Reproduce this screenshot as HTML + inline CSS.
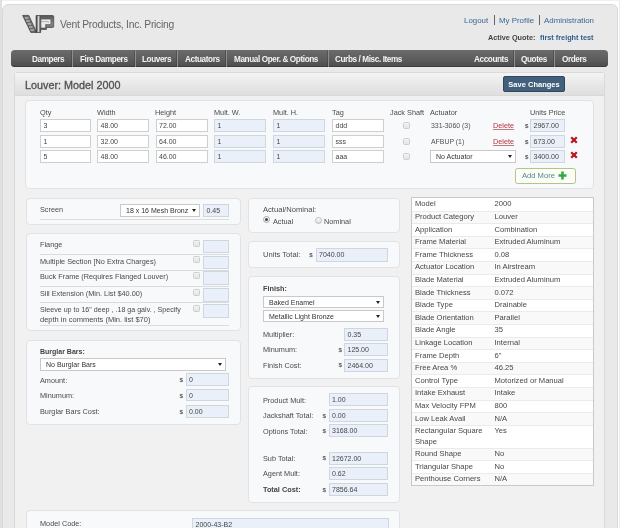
<!DOCTYPE html><html><head><meta charset="utf-8"><style>
*{box-sizing:border-box;margin:0;padding:0}
html,body{width:620px;height:528px;overflow:hidden;background:#fff;font-family:"Liberation Sans",sans-serif;color:#4a4a4a;font-size:7.3px}
.a{position:absolute}
.t{position:absolute;white-space:nowrap;line-height:10px}
#outer{left:2px;top:4px;width:616px;height:600px;background:#e9e9ea;border:1px solid #d8d8d8;border-radius:6px}
#brand{left:60px;top:18.7px;font-size:10.3px;letter-spacing:-0.25px;color:#666;line-height:12px}
.lnk{color:#2f5e8c}
#nav{left:11px;top:50px;width:597px;height:17px;border-radius:4px;background:linear-gradient(#6b6b6b,#5d5d5d 55%,#4b4b4b);box-shadow:inset 0 -1px 0 #3c3c3c}
.nv{position:absolute;top:1.2px;height:17px;line-height:17px;color:#f4f4f4;font-weight:bold;font-size:8.2px;letter-spacing:-0.4px;white-space:nowrap}
.sep{position:absolute;top:0;width:1px;height:17px;background:#8e8e8e;box-shadow:-1px 0 0 rgba(50,50,50,0.35)}
#content{left:14px;top:72px;width:591px;height:500px;background:#f1f1f2;border:1px solid #d9d9d9;border-radius:3px}
#chead{left:15px;top:73px;width:589px;height:23px;background:linear-gradient(#f4f4f4,#e6e6e6 60%,#dfdfdf);border-bottom:1px solid #d9d9d9}
#title{left:25px;top:78.5px;font-size:10.8px;color:#505050;line-height:13px;-webkit-text-stroke:0.3px #505050}
#save{left:503px;top:76px;width:62px;height:16px;background:#42607b;border:1px solid #2f475e;border-radius:2px;color:#fff;font-weight:bold;font-size:7.5px;line-height:15px;text-align:center}
.pnl{position:absolute;background:#f8f9fb;border:1px solid #e1e2e5;border-radius:4px}
.in{position:absolute;border:1px solid #cfcfcf;background:#fff;font-size:7px;line-height:11px;padding-left:2.5px;color:#454545;white-space:nowrap;overflow:hidden}
.ro{background:#eaf0f9;border-color:#d0d6dd}
.cb{position:absolute;width:7px;height:7px;border:1px solid #cdcdcd;border-radius:1.5px;background:linear-gradient(#f4f4f4,#e4e4e4)}
.sel{position:absolute;border:1px solid #c9c9c9;background:#fff;font-size:7px;line-height:11px;padding-left:5px;color:#333;white-space:nowrap;overflow:hidden}
.sel:after{content:"";position:absolute;right:3px;top:4px;border-left:2.2px solid transparent;border-right:2.2px solid transparent;border-top:3.5px solid #222}
.hl{position:absolute;height:1px;background:#dcdcdc}
.tbl{position:absolute;background:#fff;border:1px solid #c9c9c9}
.tr{position:absolute;left:0;width:100%}
.tr:nth-child(even){background:#f7f7f7}
</style></head><body><div id="wrap" style="position:absolute;left:0;top:0;width:620px;height:528px;overflow:hidden;filter:blur(0.35px)">
<div class="a" style="left:0;top:0;width:620px;height:1px;background:#f0f0f0"></div><div class="a" style="left:0;top:0;width:1.5px;height:528px;background:#e0e0e0"></div><div class="a" style="left:619px;top:0;width:1px;height:528px;background:#ececec"></div>
<div id="outer" class="a"></div>
<svg class="a" style="left:18px;top:10px" width="40" height="28" viewBox="0 0 40 28">
  <defs>
   <linearGradient id="lg1" x1="0" x2="1" y1="0" y2="0"><stop offset="0" stop-color="#3a3a3a"/><stop offset="0.5" stop-color="#d8d8d8"/><stop offset="1" stop-color="#444"/></linearGradient>
   <linearGradient id="lg2" x1="0" x2="0" y1="0" y2="1"><stop offset="0" stop-color="#555"/><stop offset="0.5" stop-color="#8a8a8a"/><stop offset="1" stop-color="#505050"/></linearGradient>
  </defs>
  <polygon points="4.6,5.4 10.8,5.4 18.6,22.4 12.8,22.4" fill="#6a6a6a" stroke="#3a3a3a" stroke-width="0.7"/>
  <g stroke="#cfcfcf" stroke-width="1.1"><line x1="6.9" y1="8" x2="10.4" y2="8"/><line x1="8.3" y1="11" x2="11.8" y2="11"/><line x1="9.7" y1="14" x2="13.2" y2="14"/><line x1="11.1" y1="17" x2="14.6" y2="17"/><line x1="12.5" y1="20" x2="16" y2="20"/></g>
  <path d="M18.1,5.5 H34.6 Q35.7,5.5 35.7,6.6 V16.4 Q35.7,17.4 34.6,17.4 H28.4 V19.4 H22.7 V22.5 H18.1 Z" fill="url(#lg2)" stroke="#3c3c3c" stroke-width="0.7"/>
  <rect x="18.5" y="5.9" width="3.9" height="16.3" fill="url(#lg1)"/>
  <path d="M22.9,9.1 H32.9 V14.6 H27.6 V18 H22.9 Z" fill="#ececec" stroke="#444" stroke-width="0.6"/>
  <path d="M22.9,11.6 H30.4 V12.8" fill="none" stroke="#9a9a9a" stroke-width="0.7"/>
</svg>
<div id="brand" class="t">Vent Products, Inc. Pricing</div>
<div class="t" style="left:464px;top:16.0px;color:#3a6794;font-size:7.9px">Logout</div>
<div class="a" style="left:494px;top:15px;width:1px;height:10px;background:#666"></div>
<div class="t" style="left:499px;top:16.0px;color:#3a6794;font-size:7.9px">My Profile</div>
<div class="a" style="left:539px;top:15px;width:1px;height:10px;background:#666"></div>
<div class="t" style="left:544px;top:16.0px;color:#3a6794;font-size:7.9px">Administration</div>
<div class="t" style="left:488px;top:32.8px;font-weight:bold;color:#444">Active Quote:</div>
<div class="t" style="left:540px;top:32.8px;font-weight:bold;color:#2f5e8c">first freight test</div>
<div id="nav" class="a">
<div class="nv" style="left:21px">Dampers</div>
<div class="sep" style="left:61px"></div>
<div class="nv" style="left:69px">Fire Dampers</div>
<div class="sep" style="left:124px"></div>
<div class="nv" style="left:131px">Louvers</div>
<div class="sep" style="left:166px"></div>
<div class="nv" style="left:174px">Actuators</div>
<div class="sep" style="left:215px"></div>
<div class="nv" style="left:223px">Manual Oper. &amp; Options</div>
<div class="sep" style="left:317px"></div>
<div class="nv" style="left:324px">Curbs / Misc. Items</div>
<div class="nv" style="left:463px">Accounts</div>
<div class="sep" style="left:503px"></div>
<div class="nv" style="left:510px">Quotes</div>
<div class="sep" style="left:543px"></div>
<div class="nv" style="left:551px">Orders</div>
</div>
<div id="content" class="a"></div><div id="chead" class="a"></div>
<div id="title" class="t">Louver: Model 2000</div><div id="save" class="a">Save Changes</div>
<div class="pnl" style="left:25px;top:100px;width:569px;height:89px"></div>
<div class="t" style="left:40px;top:108.0px;">Qty</div>
<div class="t" style="left:97px;top:108.0px;">Width</div>
<div class="t" style="left:155px;top:108.0px;">Height</div>
<div class="t" style="left:214px;top:108.0px;">Mult. W.</div>
<div class="t" style="left:273px;top:108.0px;">Mult. H.</div>
<div class="t" style="left:332px;top:108.0px;">Tag</div>
<div class="t" style="left:390px;top:108.0px;">Jack Shaft</div>
<div class="t" style="left:430px;top:108.0px;">Actuator</div>
<div class="t" style="left:530px;top:108.0px;">Units Price</div>
<div class="in" style="left:40px;top:119px;width:51px;height:13px;">3</div>
<div class="in" style="left:97px;top:119px;width:52px;height:13px;">48.00</div>
<div class="in" style="left:155.5px;top:119px;width:52.0px;height:13px;">72.00</div>
<div class="in ro" style="left:214px;top:119px;width:52px;height:13px;">1</div>
<div class="in ro" style="left:273px;top:119px;width:52px;height:13px;">1</div>
<div class="in" style="left:332px;top:119px;width:52px;height:13px;">ddd</div>
<div class="cb" style="left:402.5px;top:122.0px"></div>
<div class="t" style="left:431px;top:121.2px;font-size:6.9px;color:#505050">331-3060 (3)</div>
<div class="t" style="left:493px;top:121.0px;color:#b3343a;text-decoration:underline;text-decoration-color:#c9777b">Delete</div>
<div class="t" style="left:525px;top:121.5px;font-size:6.2px;font-weight:bold;color:#555;margin-top:-0.4px">$</div>
<div class="in ro" style="left:530px;top:119px;width:34.5px;height:13px;">2967.00</div>
<div class="in" style="left:40px;top:135px;width:51px;height:13px;">1</div>
<div class="in" style="left:97px;top:135px;width:52px;height:13px;">32.00</div>
<div class="in" style="left:155.5px;top:135px;width:52.0px;height:13px;">64.00</div>
<div class="in ro" style="left:214px;top:135px;width:52px;height:13px;">1</div>
<div class="in ro" style="left:273px;top:135px;width:52px;height:13px;">1</div>
<div class="in" style="left:332px;top:135px;width:52px;height:13px;">sss</div>
<div class="cb" style="left:402.5px;top:138.0px"></div>
<div class="t" style="left:431px;top:137.2px;font-size:6.9px;color:#505050">AFBUP (1)</div>
<div class="t" style="left:493px;top:137.0px;color:#b3343a;text-decoration:underline;text-decoration-color:#c9777b">Delete</div>
<div class="t" style="left:525px;top:137.5px;font-size:6.2px;font-weight:bold;color:#555;margin-top:-0.4px">$</div>
<div class="in ro" style="left:530px;top:135px;width:34.5px;height:13px;">673.00</div>
<svg class="a" style="left:569.5px;top:136px" width="8" height="8" viewBox="0 0 8 8"><path d="M1.2,1.2 L6.8,6.8 M6.8,1.2 L1.2,6.8" stroke="#b8171f" stroke-width="2.3"/></svg>
<div class="in" style="left:40px;top:150px;width:51px;height:13px;">5</div>
<div class="in" style="left:97px;top:150px;width:52px;height:13px;">48.00</div>
<div class="in" style="left:155.5px;top:150px;width:52.0px;height:13px;">46.00</div>
<div class="in ro" style="left:214px;top:150px;width:52px;height:13px;">1</div>
<div class="in ro" style="left:273px;top:150px;width:52px;height:13px;">1</div>
<div class="in" style="left:332px;top:150px;width:52px;height:13px;">aaa</div>
<div class="cb" style="left:402.5px;top:153.0px"></div>
<div class="sel" style="left:430px;top:150px;width:86px;height:13px">No Actuator</div>
<div class="t" style="left:525px;top:152.5px;font-size:6.2px;font-weight:bold;color:#555;margin-top:-0.4px">$</div>
<div class="in ro" style="left:530px;top:150px;width:34.5px;height:13px;">3400.00</div>
<svg class="a" style="left:569.5px;top:151px" width="8" height="8" viewBox="0 0 8 8"><path d="M1.2,1.2 L6.8,6.8 M6.8,1.2 L1.2,6.8" stroke="#b8171f" stroke-width="2.3"/></svg>
<div class="a" style="left:515px;top:168px;width:61px;height:16px;background:#fcfdf9;border:1px solid #b3c67e;border-radius:2.5px"></div>
<div class="t" style="left:522px;top:171.2px;color:#4f8a80;font-size:7.6px">Add More</div>
<svg class="a" style="left:558px;top:171px" width="9" height="9" viewBox="0 0 9 9"><path d="M4.5,0.5 V8.5 M0.5,4.5 H8.5" stroke="#36a846" stroke-width="2.6"/></svg>
<div class="pnl" style="left:25.5px;top:198px;width:215.0px;height:27px"></div>
<div class="t" style="left:40px;top:205.0px;">Screen</div>
<div class="sel" style="left:120px;top:204px;width:80px;height:13px">18 x 16 Mesh Bronz</div>
<div class="in ro" style="left:203px;top:204px;width:26px;height:13px;">0.45</div>
<div class="hl" style="left:40px;top:219px;width:189px"></div>
<div class="pnl" style="left:25.5px;top:233px;width:215.0px;height:98px"></div>
<div class="t" style="left:40px;top:240.4px;">Flange</div>
<div class="cb" style="left:193.0px;top:240.1px"></div>
<div class="in ro" style="left:203px;top:239.70000000000002px;width:26px;height:13.599999999999994px;"></div>
<div class="hl" style="left:40px;top:254px;width:189px"></div>
<div class="t" style="left:40px;top:256.5px;">Multiple Section [No Extra Charges)</div>
<div class="cb" style="left:193.0px;top:256.2px"></div>
<div class="in ro" style="left:203px;top:255.8px;width:26px;height:13.599999999999966px;"></div>
<div class="hl" style="left:40px;top:270px;width:189px"></div>
<div class="t" style="left:40px;top:272.0px;">Buck Frame (Requires Flanged Louver)</div>
<div class="cb" style="left:193.0px;top:271.7px"></div>
<div class="in ro" style="left:203px;top:271.3px;width:26px;height:13.599999999999966px;"></div>
<div class="hl" style="left:40px;top:286px;width:189px"></div>
<div class="t" style="left:40px;top:289.0px;">Sill Extension (Min. List $40.00)</div>
<div class="cb" style="left:193.0px;top:288.7px"></div>
<div class="in ro" style="left:203px;top:288.3px;width:26px;height:13.599999999999966px;"></div>
<div class="hl" style="left:40px;top:302px;width:189px"></div>
<div class="t" style="left:40px;top:305.0px;font-size:7.1px">Sleeve up to 16" deep , .18 ga galv. , Specify</div>
<div class="t" style="left:40px;top:314.7px;font-size:7.5px">depth in comments (Min. list $70)</div>
<div class="cb" style="left:193.0px;top:304.7px"></div>
<div class="in ro" style="left:203px;top:304.3px;width:26px;height:13.699999999999989px;"></div>
<div class="hl" style="left:40px;top:325px;width:189px"></div>
<div class="pnl" style="left:25.5px;top:339.5px;width:215.0px;height:85.0px"></div>
<div class="t" style="left:40px;top:347.3px;font-weight:bold;color:#444;font-size:7px">Burglar Bars:</div>
<div class="sel" style="left:40px;top:358px;width:186px;height:12.5px">No Burglar Bars</div>
<div class="t" style="left:40px;top:375.6px;">Amount:</div>
<div class="t" style="left:179.5px;top:375.6px;font-size:6.2px;font-weight:bold;color:#555;margin-top:-0.4px">$</div>
<div class="in ro" style="left:185.5px;top:373.3px;width:43.5px;height:12.800000000000011px;">0</div>
<div class="t" style="left:40px;top:391.0px;">Minumum:</div>
<div class="t" style="left:179.5px;top:391.0px;font-size:6.2px;font-weight:bold;color:#555;margin-top:-0.4px">$</div>
<div class="in ro" style="left:185.5px;top:388.7px;width:43.5px;height:12.800000000000011px;">0</div>
<div class="t" style="left:40px;top:407.3px;">Burglar Bars Cost:</div>
<div class="t" style="left:179.5px;top:407.3px;font-size:6.2px;font-weight:bold;color:#555;margin-top:-0.4px">$</div>
<div class="in ro" style="left:185.5px;top:405.0px;width:43.5px;height:12.800000000000011px;">0.00</div>
<div class="pnl" style="left:247.5px;top:197.5px;width:152.5px;height:35.5px"></div>
<div class="t" style="left:263px;top:204.6px;font-size:7.6px">Actual/Nominal:</div>
<div class="a" style="left:262.5px;top:216.3px;width:7px;height:7px;border-radius:50%;border:1px solid #aaa;background:linear-gradient(#fff,#e8e8e8)"></div>
<div class="a" style="left:264.5px;top:218.3px;width:3px;height:3px;border-radius:50%;background:#444"></div>
<div class="t" style="left:273px;top:216.5px;">Actual</div>
<div class="a" style="left:314.5px;top:216.5px;width:7px;height:7px;border-radius:50%;border:1px solid #bbb;background:linear-gradient(#fff,#ddd)"></div>
<div class="t" style="left:324px;top:216.5px;">Nominal</div>
<div class="pnl" style="left:247.5px;top:240.5px;width:152.5px;height:27.5px"></div>
<div class="t" style="left:263px;top:250.4px;font-size:7.6px">Units Total:</div>
<div class="t" style="left:309.2px;top:250.6px;font-size:6.2px;font-weight:bold;color:#555;margin-top:-0.4px">$</div>
<div class="in ro" style="left:315.5px;top:248px;width:72.0px;height:13.5px;">7040.00</div>
<div class="pnl" style="left:247.5px;top:276px;width:152.5px;height:102.5px"></div>
<div class="t" style="left:263px;top:283.8px;font-weight:bold;color:#444">Finish:</div>
<div class="sel" style="left:263px;top:296px;width:121px;height:11.5px">Baked Enamel</div>
<div class="sel" style="left:263px;top:310px;width:121px;height:12px">Metallic Light Bronze</div>
<div class="t" style="left:263px;top:329.7px;">Multiplier:</div>
<div class="in ro" style="left:344px;top:327.5px;width:43.5px;height:13.0px;">0.35</div>
<div class="t" style="left:263px;top:345.3px;">Minumum:</div>
<div class="t" style="left:338.5px;top:345.3px;font-size:6.2px;font-weight:bold;color:#555;margin-top:-0.4px">$</div>
<div class="in ro" style="left:344px;top:343px;width:43.5px;height:13px;">125.00</div>
<div class="t" style="left:263px;top:360.5px;">Finish Cost:</div>
<div class="t" style="left:338.5px;top:360.5px;font-size:6.2px;font-weight:bold;color:#555;margin-top:-0.4px">$</div>
<div class="in ro" style="left:344px;top:358.5px;width:43.5px;height:13.0px;">2464.00</div>
<div class="pnl" style="left:247.5px;top:386px;width:152.5px;height:117px"></div>
<div class="t" style="left:263px;top:395.6px;">Product Mult:</div>
<div class="in ro" style="left:328.5px;top:393.3px;width:59.5px;height:13.0px;">1.00</div>
<div class="t" style="left:263px;top:410.9px;">Jackshaft Total:</div>
<div class="t" style="left:322.5px;top:410.9px;font-size:6.2px;font-weight:bold;color:#555;margin-top:-0.4px">$</div>
<div class="in ro" style="left:328.5px;top:408.8px;width:59.5px;height:13.0px;">0.00</div>
<div class="t" style="left:263px;top:426.6px;">Options Total:</div>
<div class="t" style="left:322.5px;top:426.6px;font-size:6.2px;font-weight:bold;color:#555;margin-top:-0.4px">$</div>
<div class="in ro" style="left:328.5px;top:424.3px;width:59.5px;height:13.0px;">3168.00</div>
<div class="t" style="left:263px;top:453.8px;">Sub Total:</div>
<div class="t" style="left:322.5px;top:453.8px;font-size:6.2px;font-weight:bold;color:#555;margin-top:-0.4px">$</div>
<div class="in ro" style="left:328.5px;top:451.8px;width:59.5px;height:13.0px;">12672.00</div>
<div class="t" style="left:263px;top:469.4px;">Agent Mult:</div>
<div class="in ro" style="left:328.5px;top:467.3px;width:59.5px;height:13.0px;">0.62</div>
<div class="t" style="left:263px;top:485.0px;font-weight:bold;color:#444">Total Cost:</div>
<div class="t" style="left:322.5px;top:485.0px;font-size:6.2px;font-weight:bold;color:#555;margin-top:-0.4px">$</div>
<div class="in ro" style="left:328.5px;top:482.8px;width:59.5px;height:13.0px;">7856.64</div>
<div class="pnl" style="left:25.5px;top:510px;width:374.5px;height:50px"></div>
<div class="t" style="left:40px;top:518.5px;">Model Code:</div>
<div class="in ro" style="left:192px;top:518px;width:197px;height:13px;">2000-43-B2</div>
<div class="a" style="left:410.5px;top:197px;width:183px;height:288.5px;background:#fff"></div>
<div class="a" style="left:411.5px;top:198.00px;width:181px;height:12.6px;background:#fff;border-top:0px solid #ebebeb"></div>
<div class="t" style="left:415px;top:199.30px;line-height:10.4px;font-size:7.6px;color:#474747">Model</div>
<div class="t" style="left:494.5px;top:199.30px;line-height:10.4px;font-size:7.6px;color:#474747">2000</div>
<div class="a" style="left:411.5px;top:210.60px;width:181px;height:12.6px;background:#f9f9f9;border-top:1px solid #ebebeb"></div>
<div class="t" style="left:415px;top:211.90px;line-height:10.4px;font-size:7.6px;color:#474747">Product Category</div>
<div class="t" style="left:494.5px;top:211.90px;line-height:10.4px;font-size:7.6px;color:#474747">Louver</div>
<div class="a" style="left:411.5px;top:223.20px;width:181px;height:12.6px;background:#fff;border-top:1px solid #ebebeb"></div>
<div class="t" style="left:415px;top:224.50px;line-height:10.4px;font-size:7.6px;color:#474747">Application</div>
<div class="t" style="left:494.5px;top:224.50px;line-height:10.4px;font-size:7.6px;color:#474747">Combination</div>
<div class="a" style="left:411.5px;top:235.80px;width:181px;height:12.6px;background:#f9f9f9;border-top:1px solid #ebebeb"></div>
<div class="t" style="left:415px;top:237.10px;line-height:10.4px;font-size:7.6px;color:#474747">Frame Material</div>
<div class="t" style="left:494.5px;top:237.10px;line-height:10.4px;font-size:7.6px;color:#474747">Extruded Aluminum</div>
<div class="a" style="left:411.5px;top:248.40px;width:181px;height:12.6px;background:#fff;border-top:1px solid #ebebeb"></div>
<div class="t" style="left:415px;top:249.70px;line-height:10.4px;font-size:7.6px;color:#474747">Frame Thickness</div>
<div class="t" style="left:494.5px;top:249.70px;line-height:10.4px;font-size:7.6px;color:#474747">0.08</div>
<div class="a" style="left:411.5px;top:261.00px;width:181px;height:12.6px;background:#f9f9f9;border-top:1px solid #ebebeb"></div>
<div class="t" style="left:415px;top:262.30px;line-height:10.4px;font-size:7.6px;color:#474747">Actuator Location</div>
<div class="t" style="left:494.5px;top:262.30px;line-height:10.4px;font-size:7.6px;color:#474747">In Airstream</div>
<div class="a" style="left:411.5px;top:273.60px;width:181px;height:12.6px;background:#fff;border-top:1px solid #ebebeb"></div>
<div class="t" style="left:415px;top:274.90px;line-height:10.4px;font-size:7.6px;color:#474747">Blade Material</div>
<div class="t" style="left:494.5px;top:274.90px;line-height:10.4px;font-size:7.6px;color:#474747">Extruded Aluminum</div>
<div class="a" style="left:411.5px;top:286.20px;width:181px;height:12.6px;background:#f9f9f9;border-top:1px solid #ebebeb"></div>
<div class="t" style="left:415px;top:287.50px;line-height:10.4px;font-size:7.6px;color:#474747">Blade Thickness</div>
<div class="t" style="left:494.5px;top:287.50px;line-height:10.4px;font-size:7.6px;color:#474747">0.072</div>
<div class="a" style="left:411.5px;top:298.80px;width:181px;height:12.6px;background:#fff;border-top:1px solid #ebebeb"></div>
<div class="t" style="left:415px;top:300.10px;line-height:10.4px;font-size:7.6px;color:#474747">Blade Type</div>
<div class="t" style="left:494.5px;top:300.10px;line-height:10.4px;font-size:7.6px;color:#474747">Drainable</div>
<div class="a" style="left:411.5px;top:311.40px;width:181px;height:12.6px;background:#f9f9f9;border-top:1px solid #ebebeb"></div>
<div class="t" style="left:415px;top:312.70px;line-height:10.4px;font-size:7.6px;color:#474747">Blade Orientation</div>
<div class="t" style="left:494.5px;top:312.70px;line-height:10.4px;font-size:7.6px;color:#474747">Parallel</div>
<div class="a" style="left:411.5px;top:324.00px;width:181px;height:12.6px;background:#fff;border-top:1px solid #ebebeb"></div>
<div class="t" style="left:415px;top:325.30px;line-height:10.4px;font-size:7.6px;color:#474747">Blade Angle</div>
<div class="t" style="left:494.5px;top:325.30px;line-height:10.4px;font-size:7.6px;color:#474747">35</div>
<div class="a" style="left:411.5px;top:336.60px;width:181px;height:12.6px;background:#f9f9f9;border-top:1px solid #ebebeb"></div>
<div class="t" style="left:415px;top:337.90px;line-height:10.4px;font-size:7.6px;color:#474747">Linkage Location</div>
<div class="t" style="left:494.5px;top:337.90px;line-height:10.4px;font-size:7.6px;color:#474747">Internal</div>
<div class="a" style="left:411.5px;top:349.20px;width:181px;height:12.6px;background:#fff;border-top:1px solid #ebebeb"></div>
<div class="t" style="left:415px;top:350.50px;line-height:10.4px;font-size:7.6px;color:#474747">Frame Depth</div>
<div class="t" style="left:494.5px;top:350.50px;line-height:10.4px;font-size:7.6px;color:#474747">6"</div>
<div class="a" style="left:411.5px;top:361.80px;width:181px;height:12.6px;background:#f9f9f9;border-top:1px solid #ebebeb"></div>
<div class="t" style="left:415px;top:363.10px;line-height:10.4px;font-size:7.6px;color:#474747">Free Area %</div>
<div class="t" style="left:494.5px;top:363.10px;line-height:10.4px;font-size:7.6px;color:#474747">46.25</div>
<div class="a" style="left:411.5px;top:374.40px;width:181px;height:12.6px;background:#fff;border-top:1px solid #ebebeb"></div>
<div class="t" style="left:415px;top:375.70px;line-height:10.4px;font-size:7.6px;color:#474747">Control Type</div>
<div class="t" style="left:494.5px;top:375.70px;line-height:10.4px;font-size:7.6px;color:#474747">Motorized or Manual</div>
<div class="a" style="left:411.5px;top:387.00px;width:181px;height:12.6px;background:#f9f9f9;border-top:1px solid #ebebeb"></div>
<div class="t" style="left:415px;top:388.30px;line-height:10.4px;font-size:7.6px;color:#474747">Intake Exhaust</div>
<div class="t" style="left:494.5px;top:388.30px;line-height:10.4px;font-size:7.6px;color:#474747">Intake</div>
<div class="a" style="left:411.5px;top:399.60px;width:181px;height:12.6px;background:#fff;border-top:1px solid #ebebeb"></div>
<div class="t" style="left:415px;top:400.90px;line-height:10.4px;font-size:7.6px;color:#474747">Max Velocity FPM</div>
<div class="t" style="left:494.5px;top:400.90px;line-height:10.4px;font-size:7.6px;color:#474747">800</div>
<div class="a" style="left:411.5px;top:412.20px;width:181px;height:12.6px;background:#f9f9f9;border-top:1px solid #ebebeb"></div>
<div class="t" style="left:415px;top:413.50px;line-height:10.4px;font-size:7.6px;color:#474747">Low Leak Avail</div>
<div class="t" style="left:494.5px;top:413.50px;line-height:10.4px;font-size:7.6px;color:#474747">N/A</div>
<div class="a" style="left:411.5px;top:424.80px;width:181px;height:22.8px;background:#fff;border-top:1px solid #ebebeb"></div>
<div class="t" style="left:415px;top:426.10px;line-height:10.4px;font-size:7.6px;color:#474747">Rectangular Square<br>Shape</div>
<div class="t" style="left:494.5px;top:426.10px;line-height:10.4px;font-size:7.6px;color:#474747">Yes</div>
<div class="a" style="left:411.5px;top:447.60px;width:181px;height:12.6px;background:#f9f9f9;border-top:1px solid #ebebeb"></div>
<div class="t" style="left:415px;top:448.90px;line-height:10.4px;font-size:7.6px;color:#474747">Round Shape</div>
<div class="t" style="left:494.5px;top:448.90px;line-height:10.4px;font-size:7.6px;color:#474747">No</div>
<div class="a" style="left:411.5px;top:460.20px;width:181px;height:12.6px;background:#fff;border-top:1px solid #ebebeb"></div>
<div class="t" style="left:415px;top:461.50px;line-height:10.4px;font-size:7.6px;color:#474747">Triangular Shape</div>
<div class="t" style="left:494.5px;top:461.50px;line-height:10.4px;font-size:7.6px;color:#474747">No</div>
<div class="a" style="left:411.5px;top:472.80px;width:181px;height:12.6px;background:#f9f9f9;border-top:1px solid #ebebeb"></div>
<div class="t" style="left:415px;top:474.10px;line-height:10.4px;font-size:7.6px;color:#474747">Penthouse Corners</div>
<div class="t" style="left:494.5px;top:474.10px;line-height:10.4px;font-size:7.6px;color:#474747">N/A</div>
<div class="a" style="left:410.5px;top:197px;width:183px;height:288.5px;border:1px solid #c9c9c9"></div>
</div></body></html>
